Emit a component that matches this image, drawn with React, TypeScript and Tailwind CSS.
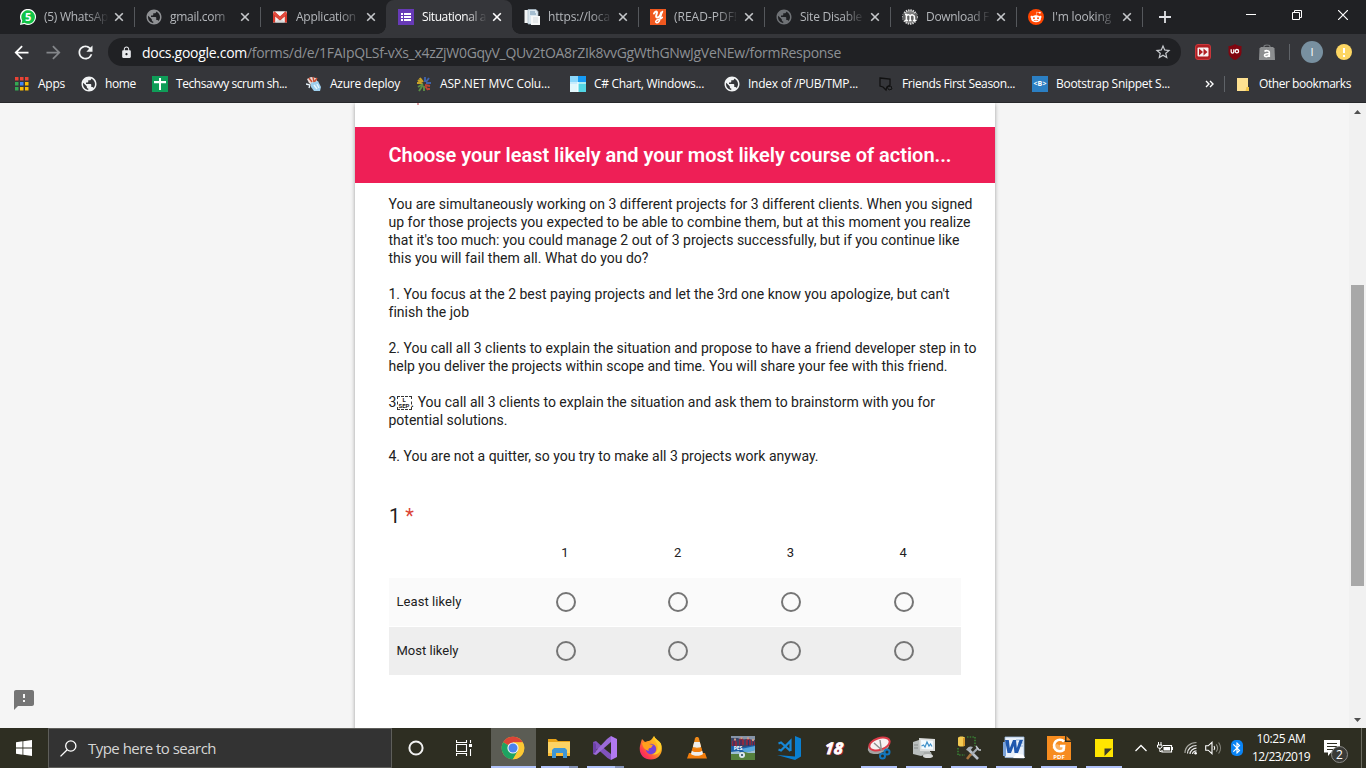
import React, { useLayoutEffect, useRef, useState } from "react";
import {
  MdArrowBack,
  MdArrowForward,
  MdBluetooth,
  MdFeedback,
  MdLock,
  MdPublic,
  MdRefresh,
  MdStarBorder,
} from "react-icons/md";
import { FaRedditAlien } from "react-icons/fa";

/* One line of text, tracked so that it fills exactly `width` pixels. */
function Fit({ text, width, className = "" }: { text: string; width: number; className?: string }) {
  const ref = useRef<HTMLSpanElement>(null);
  const [spacing, setSpacing] = useState(0);
  useLayoutEffect(() => {
    const el = ref.current;
    if (!el) return;
    el.style.letterSpacing = "0px";
    const natural = el.getBoundingClientRect().width;
    const next = (width - natural) / text.length;
    el.style.letterSpacing = next + "px";
    setSpacing(next);
  }, [text, width]);
  return (
    <span ref={ref} className={"inline-block shrink-0 whitespace-pre " + className} style={{ letterSpacing: spacing + "px" }}>
      {text}
    </span>
  );
}

/* ---------- favicons ---------- */

const WhatsAppIcon = () => (
  <svg width="16" height="16" viewBox="0 0 16 16">
    <path d="M0 16l1-4.200A8 8 0 1 1 4.300 15z" fill="#fff" />
    <path d="M1.500 14.500l.8-3A6.800 6.800 0 1 1 4.600 13.800z" fill="#12c346" />
    <text x="8.200" y="12" fontSize="11" fontWeight="700" textAnchor="middle" fill="#fff" fontFamily="Open Sans, sans-serif">5</text>
  </svg>
);

const GmailIcon = () => (
  <svg width="16" height="16" viewBox="0 0 16 16">
    <path d="M1 2.500h14v11H1z" fill="#f2f2f2" />
    <path d="M3 13.500l5-5 5 5z" fill="#d8d8d8" />
    <path d="M1 4l7 6 7-6v9.500h-2.200V7.600L8 11.500 3.200 7.600v5.900H1z" fill="#d8392b" />
    <path d="M1 4.500a2 2 0 0 1 2-2l5 4.500 5-4.500a2 2 0 0 1 2 2L8 10.500z" fill="#e0483b" />
    <path d="M3 2.500h10L8 7z" fill="#f7f7f7" />
  </svg>
);

const FormsIcon = () => (
  <svg width="16" height="16" viewBox="0 0 16 16">
    <path d="M0 0h16v16H0z" fill="#673ab7" />
    <path d="M3 4h2v2H3zM6 4h7v2H6zM3 7h2v2H3zM6 7h7v2H6zM3 10h2v2H3zM6 10h7v2H6z" fill="#fff" />
  </svg>
);

const PageIcon = () => (
  <svg width="16" height="16" viewBox="0 0 16 16">
    <path d="M.5 1h6v13h-6z" fill="#f2f5f5" />
    <path d="M4 .5h8l2 2V15H4z" fill="#dce8ef" stroke="#a9bcc8" strokeWidth=".7" />
    <path d="M6 3h5M6 5h6" stroke="#6d93b0" strokeWidth="1" />
    <path d="M7 7h9v9H7z" fill="#f6f8f8" />
    <path d="M9 9h5M9 11h5M9 13h5" stroke="#d3dadd" strokeWidth="1" />
  </svg>
);

const YIcon = () => (
  <svg width="16" height="16" viewBox="0 0 16 16">
    <path d="M0 0h16v16H0z" fill="#f0581f" />
    <path d="M4 4.500c.6-1.500 3-3 3-1C7 5 5 8.200 7 8.500s3.500-2.500 4.200-5" fill="none" stroke="#fff" strokeWidth="2" strokeLinecap="round" />
    <path d="M12.500 2.500c-1.200 2-1.600 4-2.200 6.500-.8 3.200-1.800 5-3.600 4.800-1.800-.3-1-2.600 1.600-3.200 1.800-.4 3-1 4-2.200" fill="none" stroke="#fff" strokeWidth="1.500" strokeLinecap="round" />
  </svg>
);

const GreyGlobe = ({ className }: { className: string }) => <MdPublic size={18} className={"shrink-0 " + className} />;

const MIcon = () => (
  <svg width="16" height="16" viewBox="0 0 16 16">
    <circle cx="8" cy="8" r="6.800" fill="#7d7d7d" stroke="#d6d6d6" strokeWidth="2" strokeDasharray="1.400 .9" />
    <path d="M1 5h14v6H1z" fill="#636363" />
    <path d="M3 11.500h3M7 11.500h2.500M11 11.500h3M4.400 11.500V5.500H3M4.400 7c1.200-1.700 3.600-1.500 3.800.5v4M8.200 7c1.200-1.700 4-1.500 4.200.8v3.700" fill="none" stroke="#fff" strokeWidth="1.500" />
  </svg>
);

const RedditIcon = () => (
  <span className="flex size-4 items-center justify-center rounded-full bg-[#ff4500] text-white">
    <FaRedditAlien size={12} />
  </span>
);

/* ---------- tab strip ---------- */

type Tab = { title: string; width: number; icon: React.ReactNode; active?: boolean; divider?: boolean };

const tabs: Tab[] = [
  { title: "(5) WhatsAp", width: 64, icon: <WhatsAppIcon />, divider: true },
  { title: "gmail.com", width: 55, icon: <GreyGlobe className="text-[#8f9194]" />, divider: true },
  { title: "Application", width: 60, icon: <GmailIcon /> },
  { title: "Situational a", width: 64, icon: <FormsIcon />, active: true },
  { title: "https://loca", width: 62, icon: <PageIcon />, divider: true },
  { title: "(READ-PDF!", width: 63, icon: <YIcon />, divider: true },
  { title: "Site Disable", width: 62, icon: <GreyGlobe className="text-[#6f7276]" />, divider: true },
  { title: "Download F", width: 63, icon: <MIcon />, divider: true },
  { title: "I'm looking", width: 59, icon: <RedditIcon />, divider: true },
];

const Cross = () => (
  <svg width="10" height="10" viewBox="0 0 10 10" className="shrink-0">
    <path d="M1.200 1.200l7.600 7.600M8.800 1.200L1.200 8.800" stroke="currentColor" strokeWidth="1.600" />
  </svg>
);

function TabItem({ tab }: { tab: Tab }) {
  return (
    <div className={"relative flex h-[34px] w-[126px] shrink-0 items-center pl-3 " + (tab.active ? "rounded-t-lg bg-[#35363a] text-white" : "text-[#b4b7bb]")}>
      {tab.active && (
        <>
          <span className="absolute bottom-0 -left-2 size-2 bg-[radial-gradient(circle_at_0_0,#202124_7.5px,#35363a_8px)]" />
          <span className="absolute -right-2 bottom-0 size-2 bg-[radial-gradient(circle_at_100%_0,#202124_7.5px,#35363a_8px)]" />
        </>
      )}
      <span className="flex size-4 shrink-0 items-center justify-center">{tab.icon}</span>
      <span className="ml-2 w-[65px] shrink-0 [mask-image:linear-gradient(to_right,black_66%,transparent_100%)]">
        <Fit text={tab.title} width={tab.width} className="align-top leading-5" />
      </span>
      <span className={"ml-[5px] flex " + (tab.active ? "text-white" : "text-[#c5c7ca]")}>
        <Cross />
      </span>
      {tab.divider && <span className="absolute top-[7px] right-[-1px] h-5 w-px bg-[#55585c]" />}
    </div>
  );
}

function TabStrip() {
  return (
    <div className="flex h-[34px] bg-[#202124] pl-2 text-[12px]">
      {tabs.map((t) => (
        <TabItem key={t.title} tab={t} />
      ))}
      <div className="flex w-[62px] shrink-0 items-center pl-[17px] text-[#dfe1e5]">
        <svg width="12" height="12" viewBox="0 0 12 12">
          <path d="M6 0v12M0 6h12" stroke="currentColor" strokeWidth="1.800" />
        </svg>
      </div>
      <div className="ml-auto flex h-[29px] items-center text-white">
        <span className="flex w-[46px] justify-center">
          <svg width="10" height="10" viewBox="0 0 10 10"><path d="M0 4.500h10" stroke="currentColor" /></svg>
        </span>
        <span className="flex w-[46px] justify-center">
          <svg width="10" height="10" viewBox="0 0 10 10"><path d="M.5 2.500h7v7h-7zM2.500 2.500v-2h7v7h-2" fill="none" stroke="currentColor" /></svg>
        </span>
        <span className="flex w-[46px] justify-center">
          <svg width="10" height="10" viewBox="0 0 10 10"><path d="M0 0l10 10M10 0L0 10" stroke="currentColor" strokeWidth="1.200" /></svg>
        </span>
      </div>
    </div>
  );
}

/* ---------- address bar ---------- */

const ForwardExt = () => (
  <svg width="16" height="16" viewBox="0 0 16 16">
    <rect x=".5" y=".5" width="15" height="15" rx="2.500" fill="#b01e22" stroke="#c8373b" />
    <rect x="2.500" y="3.500" width="11" height="9" rx="1" fill="#f8f2f2" />
    <path d="M4 4.500L8 8l-4 3.500zM8.500 4.500l4 3.500-4 3.500z" fill="#b01e22" />
  </svg>
);

const ShieldExt = () => (
  <svg width="16" height="16" viewBox="0 0 16 16">
    <path d="M8 0c2 1.400 4 2 6.500 2v6c0 4-3 6.500-6.500 8C4.500 14.500 1.500 12 1.500 8V2C4 2 6 1.400 8 0z" fill="#800610" />
    <path d="M4.200 5.200v2.600c0 1.800 2.600 1.800 2.600 0V5.200" fill="none" stroke="#fff" strokeWidth="1.300" />
    <circle cx="9.900" cy="7.200" r="1.700" fill="none" stroke="#fff" strokeWidth="1.300" />
  </svg>
);

const BagExt = () => (
  <svg width="16" height="16" viewBox="0 0 16 16">
    <path d="M5 5V2.500C5 .5 11 .5 11 2.500V5" fill="none" stroke="#77797c" strokeWidth="1.200" />
    <path d="M.5 4.500L2 3h12l1.500 1.500L16 16H0z" fill="#8c8e90" />
    <path d="M5.500 7.500c1-1.200 4.800-1.300 4.800 1v4.500M10 9.800c-2.500-.2-4.500 0-4.500 1.500 0 2 3.800 1.600 4.500 0" fill="none" stroke="#fff" strokeWidth="1.600" />
  </svg>
);

function AddressBar() {
  return (
    <div className="flex h-9 items-center bg-[#35363a]">
      <div className="flex w-[108px] shrink-0 items-center pl-[11px]">
        <MdArrowBack size={21} className="text-white" />
        <MdArrowForward size={21} className="ml-[11px] text-[#84868a]" />
        <MdRefresh size={21} className="ml-[11px] text-[#f1f3f4]" />
      </div>
      <div className="flex h-7 w-[1073px] shrink-0 items-center rounded-full bg-[#202124] pl-3 text-[14px]">
        <MdLock size={13} className="shrink-0 text-[#e8eaed]" />
        <Fit text="docs.google.com" width={105} className="ml-[9px] text-white" />
        <Fit text="/forms/d/e/1FAIpQLSf-vXs_x4zZjW0GqyV_QUv2tOA8rZIk8vvGgWthGNwJgVeNEw/formResponse" width={594} className="text-[#8d9094]" />
        <MdStarBorder size={18} className="mr-[9px] ml-auto text-[#c8cbcf]" />
      </div>
      <div className="flex items-center pl-[14px]">
        <ForwardExt />
        <span className="ml-4 flex"><ShieldExt /></span>
        <span className="ml-4 flex"><BagExt /></span>
        <span className="ml-[14px] h-4 w-px bg-[#5f6368]" />
        <span className="ml-[11px] flex size-[22px] items-center justify-center rounded-full bg-[#7890a0] text-[11px] text-white">I</span>
        <span className="ml-[13px] flex size-4 items-center justify-center rounded-full bg-[#fdd663]">
          <svg width="2" height="9" viewBox="0 0 2 9"><path d="M0 0h2v5H0zM0 7h2v2H0z" fill="#fff" /></svg>
        </span>
      </div>
    </div>
  );
}

/* ---------- bookmarks ---------- */

const AppsIcon = () => (
  <svg width="16" height="16" viewBox="0 0 16 16">
    <path d="M1 1h3.500v3.500H1zM6 1h3.500v3.500H6zM11 1h3.500v3.500H11z" fill="#ea4335" />
    <path d="M1 6h3.500v3.500H1zM1 11h3.500v3.500H1z" fill="#34a853" />
    <path d="M6 6h3.500v3.500H6z" fill="#4285f4" />
    <path d="M11 6h3.500v3.500H11zM6 11h3.500v3.500H6zM11 11h3.500v3.500H11z" fill="#fbbc05" />
  </svg>
);

const SheetIcon = () => (
  <svg width="16" height="16" viewBox="0 0 16 16">
    <path d="M0 0h16v16H0z" fill="#0f9d58" />
    <path d="M2 5h12v2.200H9V14H7V7.200H2zM7 2h2v4H7z" fill="#fff" />
  </svg>
);

const AzureIcon = () => (
  <svg width="16" height="16" viewBox="0 0 16 16">
    <path d="M1 3l4-2 5 1 2 5-5 3-4-3z" fill="#e9dcd8" />
    <path d="M3 2l3 4M7 1l1 5M11 2L8 7" stroke="#c95136" strokeWidth="1.500" />
    <path d="M5 7l7-2 3 6-1 4H8l-3-4z" fill="#9ed0ee" />
    <path d="M8 9l3 4M11 8l2 4M0 8l4 1-1 3" stroke="#e9f6fd" strokeWidth="1.300" fill="none" />
  </svg>
);

const AspIcon = () => (
  <svg width="16" height="16" viewBox="0 0 16 16" fill="none" strokeWidth="1.900">
    <path d="M1 7h4L2 4M5 6L4 2l3 4" stroke="#c9a227" />
    <path d="M9 6V1M10 6l3-4M10 7h5" stroke="#3f62ab" />
    <path d="M7 8l-5 3M7 9l-4 6M8 10v5" stroke="#5c8f45" />
    <path d="M9 9l5 1M9 10l3 4M13 12v2" stroke="#bd4334" />
  </svg>
);

const ChartIcon = () => (
  <svg width="16" height="16" viewBox="0 0 16 16">
    <path d="M0 0h8v8H0z" fill="#8bd8fc" />
    <path d="M8 0h8v6H8z" fill="#169bf5" />
    <path d="M0 8h8v8H0z" fill="#e2f7fc" />
    <path d="M8 6h8v10H8z" fill="#52d6e4" />
    <path d="M8 6v10M0 7h16" stroke="#fff" strokeWidth="1" />
  </svg>
);

const BoxIcon = () => (
  <svg width="16" height="16" viewBox="0 0 16 16">
    <path d="M2 2l10 1v6L9 11l-1 3-3-3-3-1z" fill="none" stroke="#111" strokeWidth="1.300" />
    <path d="M9 11l4-1 1 3-3 1z" fill="none" stroke="#111" strokeWidth="1" />
  </svg>
);

const BIcon = () => (
  <span className="flex size-4 items-center justify-center bg-[#2b7fc3] text-[7px] leading-4 font-bold text-white">
    <Fit text="<B>" width={13} />
  </span>
);

const WhiteGlobe = () => <MdPublic size={18} className="shrink-0 text-[#f1f3f4]" />;

const bookmarks = [
  { title: "Apps", width: 27, icon: <AppsIcon />, slot: "w-[67px]" },
  { title: "home", width: 31, icon: <WhiteGlobe />, slot: "w-[71px]" },
  { title: "Techsavvy scrum sh...", width: 111, icon: <SheetIcon />, slot: "w-[154px]" },
  { title: "Azure deploy", width: 70, icon: <AzureIcon />, slot: "w-[110px]" },
  { title: "ASP.NET MVC Colu...", width: 110, icon: <AspIcon />, slot: "w-[154px]" },
  { title: "C# Chart, Windows...", width: 110, icon: <ChartIcon />, slot: "w-[154px]" },
  { title: "Index of /PUB/TMP...", width: 110, icon: <WhiteGlobe />, slot: "w-[154px]" },
  { title: "Friends First Season...", width: 113, icon: <BoxIcon />, slot: "w-[154px]" },
  { title: "Bootstrap Snippet S...", width: 114, icon: <BIcon />, slot: "w-[173px]" },
];

function BookmarksBar() {
  return (
    <div className="flex h-[33px] items-center border-b border-[#27282b] bg-[#35363a] pb-1 pl-[14px] text-[12px] text-white">
      {bookmarks.map((b) => (
        <div key={b.title} className={"flex shrink-0 items-center gap-2 " + b.slot}>
          <span className="flex size-4 shrink-0 items-center justify-center">{b.icon}</span>
          <Fit text={b.title} width={b.width} />
        </div>
      ))}
      <svg width="9" height="8" viewBox="0 0 9 8"><path d="M1 1l3 3-3 3M5 1l3 3-3 3" fill="none" stroke="#fff" strokeWidth="1.400" /></svg>
      <span className="ml-[10px] h-4 w-px bg-[#5f6368]" />
      <svg width="13" height="15" viewBox="0 0 13 15" className="ml-3">
        <path d="M0 1h11v9h1v4H0z" fill="#fee191" />
        <path d="M8.500 14l1-4H12v4z" fill="#f3c64a" />
      </svg>
      <Fit text="Other bookmarks" width={92} className="ml-[9px]" />
    </div>
  );
}

/* ---------- form ---------- */

const introLines = [
  { text: "You are simultaneously working on 3 different projects for 3 different clients. When you signed", width: 584 },
  { text: "up for those projects you expected to be able to combine them, but at this moment you realize", width: 582 },
  { text: "that it's too much: you could manage 2 out of 3 projects successfully, but if you continue like", width: 571 },
  { text: "this you will fail them all. What do you do?", width: 260 },
];

const optionOne = [
  { text: "1. You focus at the 2 best paying projects and let the 3rd one know you apologize, but can't", width: 561 },
  { text: "finish the job", width: 80 },
];

const optionTwo = [
  { text: "2. You call all 3 clients to explain the situation and propose to have a friend developer step in to", width: 588 },
  { text: "help you deliver the projects within scope and time. You will share your fee with this friend.", width: 559 },
];

function Lines({ lines }: { lines: { text: string; width: number }[] }) {
  return (
    <div className="flex flex-col items-start">
      {lines.map((l) => (
        <Fit key={l.text} text={l.text} width={l.width} />
      ))}
    </div>
  );
}

const SepGlyph = () => (
  <span className="mt-[3px] flex h-[14px] w-[15px] shrink-0 flex-col items-center border border-dashed border-[#333] text-[6px] leading-[6px] font-bold">
    <span>L</span>
    <span>SEP</span>
  </span>
);

function GridRow({ label, className }: { label: string; className: string }) {
  return (
    <div className={"flex h-12 items-center " + className}>
      <span className="w-[120.2px] shrink-0 pl-[7.5px] text-[13px]">
        <Fit text={label} width={label === "Least likely" ? 65 : 62} className="align-top" />
      </span>
      {["1", "2", "3", "4"].map((c) => (
        <span key={c} className="flex w-[112.75px] shrink-0 justify-center">
          <span className="size-5 rounded-full border-2 border-[#757575]" />
        </span>
      ))}
    </div>
  );
}

function FormPage() {
  return (
    <div className="flex h-[625px] overflow-hidden bg-[#f5f5f5]">
      <div className="flex w-[355px] shrink-0 items-end pb-4 pl-3">
        <MdFeedback size={24} className="text-[#757575]" />
      </div>
      <main className="h-[640px] w-[640px] shrink-0 bg-white font-['Roboto',sans-serif] text-[14px] leading-[18px] text-[#212121] shadow-[0_1px_4px_rgba(0,0,0,0.37)]">
        <div className="h-6 pl-[62px]">
          <div className="h-0.5 w-0.5 bg-[#dda0a4]" />
        </div>
        <h1 className="flex h-14 items-center bg-[#ee1f56] pl-[33.5px] text-[20px] font-semibold text-white">
          <Fit text="Choose your least likely and your most likely course of action..." width={563} />
        </h1>
        <div className="flex flex-col gap-[18px] pt-3 pl-[33.5px]">
          <Lines lines={introLines} />
          <Lines lines={optionOne} />
          <Lines lines={optionTwo} />
          <div className="flex flex-col items-start">
            <div className="flex h-[18px]">
              <Fit text="3" width={8} />
              <SepGlyph />
              <Fit text=". You call all 3 clients to explain the situation and ask them to brainstorm with you for" width={524.5} className="-ml-px" />
            </div>
            <Fit text="potential solutions." width={119} />
          </div>
          <Fit text="4. You are not a quitter, so you try to make all 3 projects work anyway." width={430} className="self-start" />
        </div>
        <section className="mt-[39px] ml-[34px] w-[572px]">
          <h2 className="h-6 text-[20px] leading-6">
            1 <span className="text-[#db4437]">*</span>
          </h2>
          <div className="mt-4 flex h-[34px] pl-[119.5px] text-[13px]">
            {["1", "2", "3", "4"].map((n) => (
              <span key={n} className="w-[112.75px] shrink-0 text-center">{n}</span>
            ))}
          </div>
          <GridRow label="Least likely" className="bg-[#fafafa]" />
          <GridRow label="Most likely" className="mt-px bg-[#eeeeee]" />
        </section>
      </main>
      <div className="ml-auto flex w-[17px] flex-col items-center bg-[#f1f1f1]">
        <span className="flex h-[17px] items-center"><svg width="7" height="4" viewBox="0 0 7 4"><path d="M0 4l3.500-4L7 4z" fill="#505050" /></svg></span>
        <span className="mt-[165px] h-[301px] w-[13px] bg-[#a8a8a8]" />
        <span className="mt-auto flex h-[17px] items-center"><svg width="7" height="4" viewBox="0 0 7 4"><path d="M0 0l3.500 4L7 0z" fill="#505050" /></svg></span>
      </div>
    </div>
  );
}

/* ---------- taskbar icons ---------- */

const ChromeLogo = () => (
  <svg width="24" height="24" viewBox="0 0 24 24">
    <circle cx="12" cy="12" r="11.300" fill="#fbc02d" />
    <path d="M12 12L2.200 6.350A11.300 11.300 0 0 1 21.800 6.350H12z" fill="#db4437" />
    <path d="M2.200 6.350A11.300 11.300 0 0 0 12 23.300L17 14.800 12 12z" fill="#1da362" />
    <path d="M12 6.400h9.800A11.300 11.300 0 0 1 12 23.300l4.900-8.500z" fill="#fbc834" />
    <circle cx="12" cy="12" r="5.600" fill="#f4f4f4" />
    <circle cx="12" cy="12" r="4.500" fill="#4a83ef" />
  </svg>
);

const ExplorerLogo = () => (
  <svg width="24" height="22" viewBox="0 0 24 22">
    <path d="M1 2h8l2 2h12v3H1z" fill="#e8a317" />
    <path d="M1 5h22v14H1z" fill="#fcd364" />
    <path d="M1 16h22v3H1z" fill="#fabb35" />
    <path d="M5 13l2-2h11l2 2v8h-4v-5H9v5H5z" fill="#3f97d5" />
  </svg>
);

const VsLogo = () => (
  <svg width="24" height="24" viewBox="0 0 24 24">
    <path d="M0 6l3-1 10.500 9.500L18 18v6L14.500 22 4 12.500 2.500 16.500 0 18z" fill="#8052bd" />
    <path d="M0 18L14 3l4-3v6L3 19z" fill="#9b6bd8" />
    <path d="M0 6l3 2v8l-3 2z" fill="#6d41a8" />
    <path d="M18 0l6 3v18l-6 3z" fill="#b179f1" />
  </svg>
);

const FirefoxLogo = () => (
  <svg width="24" height="24" viewBox="0 0 24 24">
    <defs>
      <linearGradient id="ff" x1="1" y1="0" x2="0" y2="1">
        <stop offset="0" stopColor="#ffe226" />
        <stop offset=".45" stopColor="#ff9a1f" />
        <stop offset=".75" stopColor="#ff3b4e" />
        <stop offset="1" stopColor="#e31587" />
      </linearGradient>
    </defs>
    <path d="M2 6l1-3 3 3 3-1 1 0C13 4 14 1 15 0c1 3 5 4 7 8 3 8-2 15.500-10 15.500S-.5 17 1 10z" fill="url(#ff)" />
    <circle cx="12" cy="13" r="5.200" fill="#7543d8" />
    <path d="M3 7c3-1.500 5-1 7 1l4 1-2 3c-3 0-3 2-2 3-4-1-6-3-7-8z" fill="#ff9f1d" />
    <path d="M15 0c-1 4 5 7 3.500 13-.8 3-3 5-6 5 7 2 11-4 9.500-10C21 5 16 4 15 0z" fill="#ffcf2c" />
  </svg>
);

const VlcLogo = () => (
  <svg width="22" height="24" viewBox="0 0 22 24">
    <path d="M3 17h16l2 5.500H1z" fill="#f27d0c" />
    <path d="M11 1c1 0 1.600.4 1.900 1.300L17 18c-2 2.400-10 2.400-12 0L9.100 2.300C9.400 1.400 10 1 11 1z" fill="#f08a1a" />
    <path d="M8.200 6h5.600l1.300 4.800c-2 1.200-6.200 1.200-8.200 0zM5.800 14.700c3 1.800 7.400 1.800 10.400 0l.8 3.300c-2 2.400-10 2.400-12 0z" fill="#eee" />
    <path d="M5.800 14.700l.7-2.500c3 1.400 6 1.400 9 0l.7 2.500c-3 1.800-7.400 1.800-10.400 0z" fill="#f27d0c" />
  </svg>
);

const PesLogo = () => (
  <svg width="24" height="24" viewBox="0 0 24 24">
    <path d="M0 0h24v24H0z" fill="#2b4468" />
    <path d="M0 0h24v4H0z" fill="#8694a8" />
    <path d="M0 2h7l3 2 5-1 9 1v8H0z" fill="#3a4668" />
    <path d="M1 5l3-1 2 2v5H1zM8 3l3-1 2 2v5H8zM15 4l2-2 3 2v5h-5zM21 5l3 1v5h-3z" fill="#8d2a40" />
    <path d="M3 5v6M10 4v6M17.500 4v6M22.500 6v5" stroke="#27366d" strokeWidth="1.200" />
    <path d="M3 2.500h2v2H3zM9.500 1h2v2h-2zM16 1.200h2v2h-2zM21 3h2v2h-2z" fill="#c79a86" />
    <path d="M0 10l12 1 12-2v5l-10 3H0z" fill="#1c5fa6" />
    <path d="M10 13l14-3v4l-9 3z" fill="#58a8dc" />
    <text x="7" y="13.500" fontSize="5" fontWeight="700" textAnchor="middle" fill="#fff" fontFamily="Open Sans, sans-serif">PES</text>
    <path d="M0 16h24v8H0z" fill="#55803d" />
    <path d="M0 16l8-1 2 3H0zM14 17l10-3v3z" fill="#9dbfd3" />
    <circle cx="11" cy="19" r="3" fill="#dbe6ee" />
    <path d="M10 18h2v2h-2z" fill="#4c6a7e" />
  </svg>
);

const CodeLogo = () => (
  <svg width="24" height="24" viewBox="0 0 24 24">
    <path d="M18 0l6 2.500v18L18 24 0 19l18 1.500z" fill="#0a7fd0" />
    <path d="M1.500 7.500L4 6.500l9.500 8.500M1.500 13.500L4 14.500 13.500 5v10" fill="none" stroke="#1787d6" strokeWidth="2.200" />
  </svg>
);

const EighteenLogo = () => (
  <span className="text-[16px] leading-none font-bold text-white italic [-webkit-text-stroke:0.8px_white] [text-shadow:1px_1px_0_#a5203c,-1px_0_0_#a5203c]">
    <Fit text="18" width={20} className="-skew-x-6" />
  </span>
);

const SnipLogo = () => (
  <svg width="24" height="24" viewBox="0 0 24 24">
    <ellipse cx="11.500" cy="11" rx="11" ry="6.500" fill="#a4a4a4" transform="rotate(-18 11.500 11)" />
    <ellipse cx="12.500" cy="8" rx="10.500" ry="5.800" fill="#f7f1f1" stroke="#db3b48" strokeWidth="2" transform="rotate(-18 12.500 8)" />
    <path d="M7 7l9 8M13 4l1.500 11" stroke="#8d8d8d" strokeWidth="1.400" />
    <circle cx="20" cy="16" r="2.500" fill="none" stroke="#1377bd" strokeWidth="2" />
    <circle cx="15.500" cy="20" r="2.500" fill="none" stroke="#1377bd" strokeWidth="2" />
  </svg>
);

const MonitorLogo = () => (
  <svg width="24" height="22" viewBox="0 0 24 22">
    <path d="M1 5l9-3 8 3v11l-9 3-8-2z" fill="#b9bebd" />
    <path d="M7 1l16 1v12L8 14z" fill="#dcdedd" />
    <path d="M9 3l12 .7v8.800L9.500 12z" fill="#f3fbff" />
    <path d="M9.500 9l2-1 1.500 2 2-5 2 4 1.500-2L20 9.500" fill="none" stroke="#3e90c9" strokeWidth="1.200" />
    <path d="M12 15h7l1 4h-9z" fill="#a9adab" />
    <ellipse cx="16" cy="19" rx="5" ry="2" fill="#d8dad9" />
    <path d="M2 8h4M2 11h4" stroke="#868b89" />
  </svg>
);

const ToolsLogo = () => (
  <svg width="24" height="24" viewBox="0 0 24 24">
    <path d="M1 2c0-2 7-2 7 0v7c0 2-7 2-7 0z" fill="#f3ca52" />
    <path d="M6 2v8c2 0 2-1 2-1V2z" fill="#d3972a" />
    <path d="M10 1h8v9M1 12v7h7" fill="none" stroke="#3b9a39" strokeWidth="1.200" strokeDasharray="1.500 1.200" />
    <path d="M11 13l10 10" stroke="#b9c0c8" strokeWidth="2.600" />
    <path d="M9 14c2-4 5-4 7-3l-3 4z" fill="#a9b1b9" />
    <path d="M21 12l-7 7" stroke="#a4abb2" strokeWidth="2.200" />
    <path d="M14 18l-4 5" stroke="#a8743c" strokeWidth="2.600" />
    <path d="M19 10l3 4h2" stroke="#c3cad0" strokeWidth="1.400" fill="none" />
  </svg>
);

const WordLogo = () => (
  <svg width="24" height="24" viewBox="0 0 24 24">
    <path d="M3 1h19v21l-19-.5z" fill="#e9f1fa" stroke="#9bb8dc" strokeWidth=".8" />
    <path d="M1 6h3v14H1z" fill="#7ba3d8" />
    <path d="M14 4h7M16 7h5M17 10h4" stroke="#8fb2dc" />
    <path d="M3 4h3.800l1 8L11 4h3l.8 8 2.700-8H21l-5 13h-3.500L11.700 10 9 17H5.500z" fill="#1f57ad" />
    <path d="M11 22l3-4 7 .5L23 22z" fill="#fff" />
  </svg>
);

const FoxitLogo = () => (
  <svg width="24" height="24" viewBox="0 0 24 24">
    <path d="M0 0h18v6h6v18H0z" fill="#f78c1f" />
    <path d="M19.500 0L24 4.500h-4.500z" fill="#f78c1f" />
    <path d="M5 12l5-4 9 4-5 4z" fill="#fbb265" />
    <path d="M17 5.500A5.800 5.800 0 1 0 16.500 14l.5-4h-4" fill="none" stroke="#fff" strokeWidth="2.600" />
    <text x="12" y="22.800" fontSize="6" fontWeight="700" textAnchor="middle" fill="#fff" fontFamily="Open Sans, sans-serif">PDF</text>
  </svg>
);

const StickyLogo = () => (
  <svg width="18" height="18" viewBox="0 0 18 18">
    <path d="M0 0h18v18H0z" fill="#ffe500" />
    <path d="M9.500 17V9.500H17z" fill="#3a3a2c" />
  </svg>
);

type Task = { name: string; icon: React.ReactNode; slot: string; state?: "group" | "single" | "active" };

const tasks: Task[] = [
  { name: "chrome", icon: <ChromeLogo />, slot: "w-[45px] bg-[#5b5c54] pr-px", state: "active" },
  { name: "explorer", icon: <ExplorerLogo />, slot: "w-[46px]", state: "group" },
  { name: "vs", icon: <VsLogo />, slot: "w-[46px]", state: "group" },
  { name: "firefox", icon: <FirefoxLogo />, slot: "w-[46px]" },
  { name: "vlc", icon: <VlcLogo />, slot: "w-[46px]" },
  { name: "pes", icon: <PesLogo />, slot: "w-[46px]" },
  { name: "code", icon: <CodeLogo />, slot: "w-[46px]" },
  { name: "eighteen", icon: <EighteenLogo />, slot: "w-[45px]" },
  { name: "snip", icon: <SnipLogo />, slot: "w-[45px] pr-px", state: "single" },
  { name: "monitor", icon: <MonitorLogo />, slot: "w-[45px] pr-px", state: "single" },
  { name: "tools", icon: <ToolsLogo />, slot: "w-[45px] pr-px", state: "single" },
  { name: "word", icon: <WordLogo />, slot: "w-[45px] pr-[2px]", state: "single" },
  { name: "foxit", icon: <FoxitLogo />, slot: "w-[45px] pr-px", state: "single" },
  { name: "sticky", icon: <StickyLogo />, slot: "w-[45px] pr-px", state: "single" },
];

function TaskButton({ task }: { task: Task }) {
  return (
    <div className={"relative flex h-10 shrink-0 items-center justify-center " + task.slot}>
      {task.icon}
      {task.state === "active" && <span className="absolute inset-x-0 bottom-0 h-0.5 bg-[#b0c2f9]" />}
      {task.state === "single" && <span className="absolute bottom-0 left-1 h-0.5 w-9 bg-[#b0c2f9]" />}
      {task.state === "group" && (
        <span className="absolute bottom-0 left-[5px] flex h-0.5 w-[37px]">
          <span className="w-7 bg-[#b0c2f9]" />
          <span className="w-[9px] bg-[#8290b5]" />
        </span>
      )}
    </div>
  );
}

function Taskbar() {
  return (
    <div className="flex h-10 items-center bg-[#2e2e22] text-white">
      <div className="flex w-12 shrink-0 justify-center">
        <svg width="16" height="16" viewBox="0 0 16 16">
          <path d="M0 2.200L6.500 1.300v6.300H0zM7.300 1.200L16 0v7.600H7.300zM0 8.400h6.500v6.300L0 13.800zM7.300 8.400H16V16l-8.700-1.200z" fill="#fff" />
        </svg>
      </div>
      <div className="flex h-10 w-[344px] shrink-0 items-center border border-[#5e5e5a] bg-[#333333] pl-[11px] text-[15px] text-[#d6d6d6]">
        <svg width="17" height="17" viewBox="0 0 17 17" fill="none" stroke="#fff" strokeWidth="1.300">
          <circle cx="10.800" cy="6" r="5.100" />
          <path d="M7.200 9.700L.5 16.400" />
        </svg>
        <Fit text="Type here to search" width={128} className="ml-[11px]" />
      </div>
      <div className="flex w-12 shrink-0 justify-center">
        <svg width="16" height="16" viewBox="0 0 16 16"><circle cx="8" cy="8" r="6.600" fill="none" stroke="#f2f2f2" strokeWidth="2" /></svg>
      </div>
      <div className="flex w-[51px] shrink-0 pl-4">
        <svg width="16" height="16" viewBox="0 0 16 16" fill="none" stroke="#fff" strokeWidth="1.100">
          <path d="M.5 0v2.500h10V0M.5 16v-2.500h10V16M.5 4.500h10v7H.5zM14.500 0v3M14.500 9v7" />
          <path d="M13 4h3v3h-3z" fill="#fff" stroke="none" />
        </svg>
      </div>
      {tasks.map((t) => (
        <TaskButton key={t.name} task={t} />
      ))}
      <div className="ml-[8px] flex shrink-0 items-center">
        <svg width="12" height="8" viewBox="0 0 12 8"><path d="M.5 7L6 1.500 11.500 7" fill="none" stroke="#fff" strokeWidth="1.300" /></svg>
        <svg width="16" height="13" viewBox="0 0 16 13" className="ml-[10px]">
          <path d="M6 3.500h8.500v6.500H5V8" fill="none" stroke="#fff" strokeWidth="1.200" />
          <path d="M6.500 5H13v3.500H6.500zM14.500 5H16v3h-1.500z" fill="#fff" />
          <path d="M1.500 0v3M4 0v3M.5 3H5v2L4 6.200H1.500L.5 5zM2.800 6v3.500h1.700" fill="none" stroke="#fff" strokeWidth="1" />
        </svg>
        <svg width="13" height="14" viewBox="0 0 13 14" className="ml-[11px]" fill="none" strokeWidth="1.200">
          <path d="M1 12C1 6 6 1.500 12.500 1.500" stroke="#a9a9a2" />
          <path d="M3.500 12.500C3.500 8 7.500 4.500 12.500 4.500M6 13c0-3 3-5.800 6.500-5.800M8.500 13c0-1.500 2-3.200 4-3.200" stroke="#e8e8e8" />
          <circle cx="11.600" cy="12.300" r="1.300" fill="#fff" />
        </svg>
        <svg width="17" height="14" viewBox="0 0 17 14" className="ml-[8px]" fill="none" stroke="#fff" strokeWidth="1.100">
          <path d="M.7 4.800h2.500L7 1.300v11.400L3.200 9.200H.7z" />
          <path d="M9 5c.9 1.200.9 2.800 0 4" />
          <path d="M11.200 3.300c1.700 2.200 1.700 5.200 0 7.400M13.600 1.500c2.400 3.200 2.400 7.800 0 11" stroke="#8c8c84" />
        </svg>
        <span className="ml-[9px] flex h-4 w-3 items-center justify-center rounded-[5px] bg-[#0a84f5]">
          <MdBluetooth size={14} className="shrink-0" />
        </span>
      </div>
      <div className="ml-[9px] flex w-[58px] shrink-0 flex-col items-center text-[12px] leading-[18px]">
        <Fit text="10:25 AM" width={49} />
        <Fit text="12/23/2019" width={58} />
      </div>
      <div className="relative ml-[14px] h-[30px] w-[26px] shrink-0">
        <svg width="16" height="16" viewBox="0 0 16 16" className="mt-[7px]">
          <path d="M0 0h16v12.500H7L4 16v-3.500H0z" fill="#fff" />
          <path d="M3 3.500h10M3 6.500h10M3 9.500h6" stroke="#2e2e22" strokeWidth="1" />
        </svg>
        <span className="absolute top-[13px] left-[7px] flex size-[17px] items-center justify-center rounded-full border border-[#8b8b88] bg-[#3a3a36] text-[12px] leading-none">2</span>
      </div>
      <span className="mr-1 ml-auto h-10 w-px bg-[#6b6b60]" />
    </div>
  );
}

export default function App() {
  return (
    <div className="flex h-[768px] w-[1366px] flex-col overflow-hidden font-['Open_Sans','Noto_Sans',sans-serif]">
      <TabStrip />
      <AddressBar />
      <BookmarksBar />
      <FormPage />
      <Taskbar />
    </div>
  );
}
